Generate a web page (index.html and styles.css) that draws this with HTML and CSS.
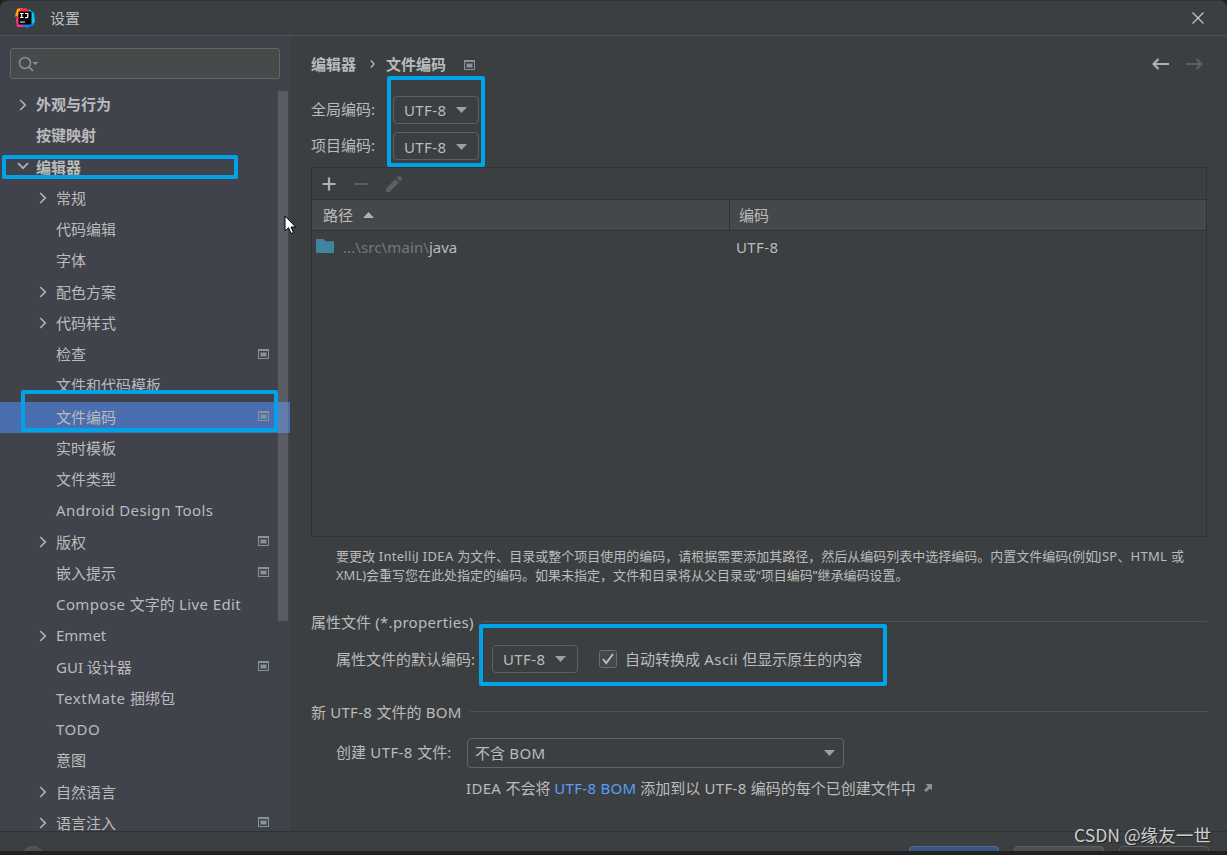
FILE: index.html
```html
<!DOCTYPE html>
<html lang="zh">
<head>
  <meta charset="UTF-8">
  <meta name="viewport" content="width=device-width, initial-scale=1.0">
  <title>设置</title>
  <link rel="stylesheet" href="styles.css">
</head>
<body>
  <svg class="defs" width="0" height="0">
    <symbol id="right" viewBox="0 0 8 12"><path d="M1.2 1l5 5-5 5" fill="none" stroke="#afb1b3" stroke-width="1.7"/></symbol>
    <symbol id="down" viewBox="0 0 12 8"><path d="M1 1.2l5 5 5-5" fill="none" stroke="#afb1b3" stroke-width="1.7"/></symbol>
    <symbol id="project" viewBox="0 0 11 10"><path fill="#87939a" fill-rule="evenodd" d="M0 0h11v10H0zM1 2v7h9V2z"/><path fill="#87939a" opacity=".45" d="M2 3h7v5H2z"/><path fill="#87939a" d="M3 4h5v3H3z"/></symbol>
    <symbol id="arrow" viewBox="0 0 11 6"><path d="M0 0h11L5.500 6z" fill="#9da0a2"/></symbol>
  </svg>

  <div class="window">
    <div class="titlebar">
      <svg class="logo" width="20" height="20" viewBox="0 0 20 20">
        <path fill="#fc801d" d="M2 1l5-1 4 4-3 12-7-4 1-3-2-2z"/>
        <path fill="#fe2857" d="M5 1l6-1 3 3-6 8-7 1 2-6z"/>
        <path fill="#fdb60d" d="M2 1l3-.6L4 6 0 9l2-4z"/>
        <path fill="#ff318c" d="M1 12l5-3 7 6-3 4H2z"/>
        <path fill="#087cfa" d="M12 3l7 2v12l-7 3-6-3 7-1z"/>
        <path fill="#07c3f2" d="M14 1l5 4 1 9-4 3-3-12z"/>
        <path d="M3.500 3.500h13v13h-13z"/>
        <path d="M5 5.500h3.500M6.700 5.500v4M5 9.500h3.500M10 5.500h2.800v3.500q0 1-2.800.7M5 14h5" stroke="#fff" stroke-width="1.200" fill="none"/>
      </svg>
      <span class="title">设置</span>
      <svg class="close" width="12" height="12" viewBox="0 0 12 12"><path d="M.5.5l11 11M11.500.5l-11 11" stroke="#c0c2c3" stroke-width="1.300"/></svg>
    </div>

    <div class="content">
      <div class="sidebar">
        <div class="search">
          <svg width="22" height="16" viewBox="0 0 22 16">
            <circle cx="7" cy="7" r="5.500" fill="none" stroke="#87939a" stroke-width="1.500"/>
            <path d="M11 11l4 4" stroke="#87939a" stroke-width="1.700"/>
            <path d="M14.500 6H20l-2.700 3.300z" fill="#87939a"/>
          </svg>
        </div>
        <div class="tree">
          <div class="node top"><svg class="chev"><use href="#right"/></svg>外观与行为</div>
          <div class="node top">按键映射</div>
          <div class="node top"><svg class="chev open"><use href="#down"/></svg>编辑器</div>
          <div class="node"><svg class="chev"><use href="#right"/></svg>常规</div>
          <div class="node">代码编辑</div>
          <div class="node">字体</div>
          <div class="node"><svg class="chev"><use href="#right"/></svg>配色方案</div>
          <div class="node"><svg class="chev"><use href="#right"/></svg>代码样式</div>
          <div class="node">检查<svg class="proj"><use href="#project"/></svg></div>
          <div class="node">文件和代码模板</div>
          <div class="node selected">文件编码<svg class="proj"><use href="#project"/></svg></div>
          <div class="node">实时模板</div>
          <div class="node">文件类型</div>
          <div class="node"><span class="en">Android Design Tools</span></div>
          <div class="node"><svg class="chev"><use href="#right"/></svg>版权<svg class="proj"><use href="#project"/></svg></div>
          <div class="node">嵌入提示<svg class="proj"><use href="#project"/></svg></div>
          <div class="node"><span><span class="en">Compose </span>文字的<span class="en"> Live Edit</span></span></div>
          <div class="node"><svg class="chev"><use href="#right"/></svg>Emmet</div>
          <div class="node">GUI 设计器<svg class="proj"><use href="#project"/></svg></div>
          <div class="node"><span><span class="en wider">TextMate </span>捆绑包</span></div>
          <div class="node"><span class="en">TODO</span></div>
          <div class="node">意图</div>
          <div class="node"><svg class="chev"><use href="#right"/></svg>自然语言</div>
          <div class="node"><svg class="chev"><use href="#right"/></svg>语言注入<svg class="proj"><use href="#project"/></svg></div>
        </div>
        <div class="scrollbar"></div>
      </div>

      <div class="main">
        <div class="crumbs">
          <span>编辑器</span>
          <svg class="sep" width="5" height="8" viewBox="0 0 5 8"><path d="M1 .5L4 4 1 7.500" fill="none" stroke="#bbb" stroke-width="1.300"/></svg>
          <span>文件编码</span>
          <svg class="crumb-proj" width="11" height="10"><use href="#project"/></svg>
          <div class="nav">
            <svg width="17" height="12" viewBox="0 0 17 12"><path d="M6.500 1l-5 5 5 5M1.500 6H17" fill="none" stroke="#afb1b3" stroke-width="2.200"/></svg>
            <svg width="17" height="12" viewBox="0 0 17 12"><path d="M10.500 1l5 5-5 5M15.500 6H0" fill="none" stroke="#5c5e60" stroke-width="2.200"/></svg>
          </div>
        </div>

        <div class="row global"><span class="label">全局编码:</span><button class="combo"><span class="en">UTF-8</span><svg width="11" height="6"><use href="#arrow"/></svg></button></div>
        <div class="row project"><span class="label">项目编码:</span><button class="combo"><span class="en">UTF-8</span><svg width="11" height="6"><use href="#arrow"/></svg></button></div>

        <div class="table">
          <div class="toolbar">
            <svg width="14" height="14" viewBox="0 0 14 14"><path d="M7 .5v13M.5 7h13" stroke="#afb1b3" stroke-width="2.200"/></svg>
            <svg width="14" height="14" viewBox="0 0 14 14"><path d="M.5 7h13" stroke="#5c5e60" stroke-width="2"/></svg>
            <svg width="18" height="18" viewBox="0 0 18 18"><path d="M0 13.500L9.500 4l3.500 3.500L3.500 17H0zM10.500 3l2-2q.8-.6 1.600 0l1.900 1.900q.6.800 0 1.600l-2 2z" fill="#5c5e60"/></svg>
          </div>
          <div class="thead">
            <div class="col-path"><span>路径</span><svg width="11" height="6" viewBox="0 0 11 6"><path d="M0 6h11L5.500 0z" fill="#afb1b3"/></svg></div>
            <div class="col-enc"><span>编码</span></div>
          </div>
          <div class="tr">
            <div class="col-path">
              <svg class="folder" width="18" height="14" viewBox="0 0 18 14"><path d="M0 0h7.500l2 2.300H18V14H0z" fill="#3e86a0"/></svg>
              <span class="dim">...\src\main\</span><span>java</span>
            </div>
            <div class="col-enc"><span class="en">UTF-8</span></div>
          </div>
        </div>

        <div class="hint">
          <div>要更改<span class="en"> IntelliJ IDEA </span>为文件、目录或整个项目使用的编码，请根据需要添加其路径，然后从编码列表中选择编码。内置文件编码(例如<span class="en">JSP</span>、<span class="en">HTML </span>或</div>
          <div>XML)会重写您在此处指定的编码。如果未指定，文件和目录将从父目录或“项目编码”继承编码设置。</div>
        </div>

        <div class="section props"><span>属性文件<span class="en"> (*.properties)</span></span><i></i></div>
        <div class="row default">
          <span class="label">属性文件的默认编码:</span>
          <button class="combo"><span class="en">UTF-8</span><svg width="11" height="6"><use href="#arrow"/></svg></button>
          <svg class="check" width="18" height="18" viewBox="0 0 18 18"><rect x=".5" y=".5" width="17" height="17" rx="2" fill="#43494a" stroke="#6b6b6b"/><path d="M4 9l3.200 4L14 4" fill="none" stroke="#bbb" stroke-width="2"/></svg>
          <span class="check-label">自动转换成<span class="en"> Ascii </span>但显示原生的内容</span>
        </div>

        <div class="section bom"><span>新<span class="en"> UTF-8 </span>文件的<span class="en"> BOM</span></span><i></i></div>
        <div class="row create">
          <span class="label">创建<span class="en"> UTF-8 </span>文件:</span>
          <button class="combo wide"><span>不含<span class="en"> BOM</span></span><svg width="11" height="6"><use href="#arrow"/></svg></button>
        </div>
        <div class="note">
          <span><span class="en">IDEA </span>不会将 <a class="en">UTF-8 BOM</a> 添加到以<span class="en"> UTF-8 </span>编码的每个已创建文件中</span>
          <svg width="8" height="8" viewBox="0 0 8 8"><path d="M1.500 0H8v6.500L6 4.600 2 8 0 6.200 3.900 2.300z" fill="#87939a"/></svg>
        </div>
      </div>
    </div>

    <div class="footer">
      <div class="help"></div>
      <div class="btn primary"></div>
      <div class="btn"></div>
      <div class="btn disabled"></div>
    </div>
  </div>

  <!-- 标注框 -->
  <div class="mark mark-editor"></div>
  <div class="mark mark-file"></div>
  <div class="mark mark-combo"></div>
  <div class="mark mark-props"></div>
  <svg class="cursor" width="13" height="20" viewBox="0 0 13 20"><path d="M1 1v15l3.500-3.300L7 18.500l2.500-1.100L7 12h4.700z" fill="#fff" stroke="#000"/></svg>
  <div class="watermark">CSDN @缘友一世</div>
</body>
</html>
```

FILE: styles.css
```css
* {
  box-sizing: border-box;
}
body {
  margin: 0;
  height: 855px;
  overflow: hidden;
  position: relative;
  background: #212121;
  color: #bbbbbb;
  font-family: "Noto Sans", "Noto Sans CJK SC", sans-serif;
  font-size: 15px;
}
svg {
  display: block;
  flex-shrink: 0;
}
.defs {
  position: absolute;
}
.en {
  letter-spacing: 0.4px;
}
.en.wider {
  letter-spacing: 0.6px;
}
.window {
  height: 851px;
  display: flex;
  flex-direction: column;
  background: #3c3f41;
  border-top: 1px solid #2b3640;
  border-radius: 8px 8px 0 0;
  overflow: hidden;
}
.titlebar {
  height: 35px;
  flex-shrink: 0;
  display: flex;
  align-items: center;
  padding: 0 23px 0 15px;
  border-bottom: 1px solid #505254;
}
.title {
  margin: 0 0 2px 15px;
}
.close {
  margin-left: auto;
}
.content {
  flex: 1;
  min-height: 0;
  display: flex;
}

/* 左侧树 */
.sidebar {
  width: 290px;
  position: relative;
  padding-top: 12px;
  background: #40434c;
  overflow: hidden;
}
.search {
  width: 270px;
  height: 31px;
  margin-left: 10px;
  padding: 7px;
  background: #464a4a;
  border: 1px solid #646464;
  border-radius: 3px;
}
.tree {
  padding-top: 10px;
}
.node {
  height: 31.26px;
  display: flex;
  align-items: center;
  padding: 0 21px 2px 56px;
  white-space: nowrap;
}
.node.top {
  padding-left: 36px;
  font-weight: bold;
}
.node.selected {
  background: #4b6eaf;
}
.chev {
  width: 8px;
  height: 12px;
  margin: 2px 9px 0 -17px;
}
.chev.open {
  width: 12px;
  height: 8px;
  margin: 0 7px 0 -19px;
}
.proj {
  width: 11px;
  height: 10px;
  margin-left: auto;
}
.scrollbar {
  position: absolute;
  left: 278px;
  top: 55px;
  width: 10px;
  height: 530px;
  background: rgba(166, 166, 166, 0.25);
}

/* 右侧内容 */
.main {
  flex: 1;
  min-width: 0;
  padding: 16px 20px 0 21px;
  white-space: nowrap;
}
.crumbs {
  height: 24px;
  display: flex;
  align-items: center;
  font-weight: bold;
}
.crumbs span {
  margin-bottom: 2px;
}
.sep {
  margin: 0 11px 0 14px;
}
.crumb-proj {
  margin: 2px 0 0 18px;
}
.nav {
  display: flex;
  gap: 17px;
  margin: 0 4px 0 auto;
}
.row {
  display: flex;
  align-items: center;
}
.label {
  margin-bottom: 2px;
}
.combo {
  width: 86px;
  height: 28px;
  display: flex;
  align-items: center;
  justify-content: space-between;
  padding: 0 11px 0 10px;
  background: #3c3f41;
  border: 1px solid #5e6060;
  border-radius: 4px;
  color: #bbbbbb;
  font: inherit;
}
.global {
  height: 28px;
  margin-top: 20px;
}
.project {
  height: 28px;
  margin-top: 8px;
}
.global .label,
.project .label {
  width: 82px;
}
.project .label,
.global .label {
  margin-bottom: 4px;
}
.project .combo {
  padding-top: 1px;
}
.table {
  height: 370px;
  margin-top: 7px;
  border: 1px solid #323232;
}
.toolbar {
  height: 31px;
  display: flex;
  align-items: center;
  gap: 18px;
  padding-left: 10px;
}
.thead {
  height: 32px;
  display: flex;
  background: #45484a;
  border-top: 1px solid #323232;
  border-bottom: 1px solid #323232;
}
.thead span {
  margin-bottom: 2px;
}
.tr {
  height: 32px;
  display: flex;
}
.col-path {
  width: 418px;
  display: flex;
  align-items: center;
}
.col-enc {
  display: flex;
  align-items: center;
  padding-left: 6px;
}
.thead .col-path {
  gap: 10px;
  padding-left: 11px;
  border-right: 1px solid #323232;
}
.thead .col-enc {
  padding-left: 9px;
}
.tr .col-path {
  padding-left: 4px;
}
.folder {
  margin: -3px 9px 0 0;
}
.dim {
  color: #787878;
  letter-spacing: 0.1px;
}
.hint {
  margin-top: 10px;
  padding-left: 25px;
  font-size: 13px;
  line-height: 19px;
}
.hint .en {
  letter-spacing: 0.3px;
}
.section {
  height: 20px;
  display: flex;
  align-items: center;
}
.section > span {
  margin-bottom: 4px;
}
.section .en {
  letter-spacing: 0.3px;
}
.section i {
  flex: 1;
  height: 1px;
  margin: -3px 0 0 8px;
  background: #515355;
}
.props {
  margin-top: 28px;
}
.default {
  height: 28px;
  margin-top: 12px;
  padding-left: 25px;
}
.default .label {
  width: 156px;
}
.check {
  margin: 0 8px 0 21px;
}
.check-label {
  margin-bottom: 2px;
}
.bom {
  margin-top: 30px;
}
.create {
  height: 30px;
  margin-top: 15px;
  padding-left: 25px;
}
.create .label {
  width: 131px;
  margin-bottom: 3px;
}
.wide {
  width: 377px;
  height: 30px;
  padding: 0 8px 0 7px;
  border-color: #646464;
}
.wide > span {
  margin-bottom: 2px;
}
.note {
  height: 22px;
  display: flex;
  align-items: center;
  margin-top: 8px;
  padding-left: 155px;
}
.note .en {
  letter-spacing: 0.3px;
}
.note a {
  color: #589df6;
}
.note svg {
  margin: 2px 0 0 8px;
}

/* 底部按钮栏 */
.footer {
  height: 20px;
  flex-shrink: 0;
  display: flex;
  gap: 15px;
  padding: 14px 18px 0 22px;
  border-top: 1px solid #323232;
  overflow: hidden;
}
.help {
  width: 22px;
  height: 22px;
  margin-right: auto;
  border: 1px solid #5e6060;
  border-radius: 50%;
  background: #4c5052;
}
.btn {
  width: 90px;
  height: 28px;
  background: #4c5052;
  border: 1px solid #5e6060;
  border-radius: 4px;
}
.btn.primary {
  background: #365880;
  border-color: #4c708c;
}
.btn.disabled {
  background: #3c3f41;
}

.mark {
  position: absolute;
  border: 4px solid #00a2e8;
  border-radius: 2px;
}
.mark-editor {
  left: 2px;
  top: 155px;
  width: 236px;
  height: 24px;
}
.mark-file {
  left: 21px;
  top: 390px;
  width: 257px;
  height: 42px;
}
.mark-combo {
  left: 387px;
  top: 76px;
  width: 98px;
  height: 91px;
}
.mark-props {
  left: 479px;
  top: 624px;
  width: 408px;
  height: 62px;
}
.cursor {
  position: absolute;
  left: 284px;
  top: 215px;
}
.watermark {
  position: absolute;
  right: 16px;
  top: 823px;
  color: #cfcfcf;
  font-family: "Noto Sans CJK SC", sans-serif;
  font-size: 17.6px;
  line-height: 24px;
  text-shadow: 1px 1px 1px #222;
}
```
